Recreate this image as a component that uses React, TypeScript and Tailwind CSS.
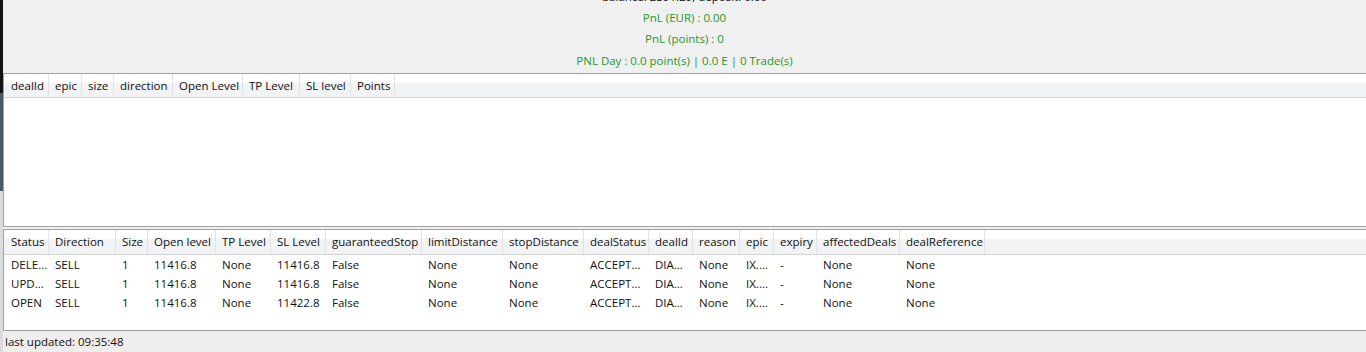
import React from "react";

// ── Data ─────────────────────────────────────────────────

const POSITION_COLS = [
  { label: "dealId", w: 44 },
  { label: "epic", w: 33 },
  { label: "size", w: 32 },
  { label: "direction", w: 59 },
  { label: "Open Level", w: 70 },
  { label: "TP Level", w: 57 },
  { label: "SL level", w: 51 },
  { label: "Points", w: 44 },
];

const HISTORY_COLS = [
  { label: "Status", w: 44 },
  { label: "Direction", w: 67 },
  { label: "Size", w: 32 },
  { label: "Open level", w: 68 },
  { label: "TP Level", w: 55 },
  { label: "SL Level", w: 55 },
  { label: "guaranteedStop", w: 96 },
  { label: "limitDistance", w: 81 },
  { label: "stopDistance", w: 81 },
  { label: "dealStatus", w: 65 },
  { label: "dealId", w: 44 },
  { label: "reason", w: 47 },
  { label: "epic", w: 34 },
  { label: "expiry", w: 43 },
  { label: "affectedDeals", w: 83 },
  { label: "dealReference", w: 85 },
];

const HISTORY_ROWS = [
  ["DELE...", "SELL", "1", "11416.8", "None", "11416.8", "False", "None", "None", "ACCEPT...", "DIA...", "None", "IX....", "-", "None", "None"],
  ["UPD...", "SELL", "1", "11416.8", "None", "11416.8", "False", "None", "None", "ACCEPT...", "DIA...", "None", "IX....", "-", "None", "None"],
  ["OPEN", "SELL", "1", "11416.8", "None", "11422.8", "False", "None", "None", "ACCEPT...", "DIA...", "None", "IX....", "-", "None", "None"],
];

// ── Pieces ───────────────────────────────────────────────

function HeaderRow({ cols, h }: { cols: { label: string; w: number }[]; h: string }) {
  return (
    <div
      className={`flex ${h} shrink-0 border-b border-[#d5d5d5] bg-[linear-gradient(#ffffff_0%,#ffffff_38%,#f2f3f5_38%,#f2f3f5_100%)]`}
    >
      <div className="w-[1px] shrink-0" />
      {cols.map((c) => (
        <div
          key={c.label}
          className="flex shrink-0 items-center overflow-hidden whitespace-nowrap border-r border-[#e3e3e3] pl-[6px]"
          style={{ width: c.w }}
        >
          {c.label}
        </div>
      ))}
    </div>
  );
}

// ── App ──────────────────────────────────────────────────

export default function App() {
  return (
    <div
      className="flex h-[352px] w-[1366px] overflow-hidden bg-[#f0f0f0] text-[11.5px] text-[#111]"
      style={{ fontFamily: '"Open Sans", "Noto Sans", sans-serif' }}
    >
      {/* window edge behind */}
      <div className="flex w-[3px] shrink-0 flex-col">
        <div className="h-[93px] bg-[#141414]" />
        <div className="h-[98px] bg-[#4a5868]" />
        <div className="flex-1 bg-[#dcdcdc]" />
      </div>

      <div className="flex min-w-0 flex-1 flex-col">
        {/* Summary */}
        <div className="flex h-[74px] shrink-0 flex-col items-center border-b border-[#a0a0a0]">
          <div className="-mt-[14px] flex h-[21px] items-center">balance: 2391.29, deposit: 0.00</div>
          <div className="flex h-[21px] items-center text-[#22992a]">PnL (EUR) : 0.00</div>
          <div className="flex h-[22px] items-center text-[#22992a]">PnL (points) : 0</div>
          <div className="flex h-[21px] items-center text-[#22992a]">
            PNL Day : 0.0 point(s) | 0.0 E | 0 Trade(s)
          </div>
        </div>

        {/* Open positions */}
        <div className="flex h-[153px] shrink-0 flex-col border-b border-l border-[#a0a0a0] bg-white">
          <HeaderRow cols={POSITION_COLS} h="h-[24px]" />
          <div className="flex-1" />
        </div>

        <div className="h-[2px] shrink-0" />

        {/* Deal history */}
        <div className="flex h-[102px] shrink-0 flex-col border-y border-l border-[#a0a0a0] bg-white">
          <HeaderRow cols={HISTORY_COLS} h="h-[25px]" />
          <div>
            {HISTORY_ROWS.map((row, i) => (
              <div key={i} className="flex h-[19px]">
                <div className="w-[1px] shrink-0" />
                {row.map((cell, j) => (
                  <div
                    key={j}
                    className="flex shrink-0 items-center overflow-hidden whitespace-nowrap pl-[6px]"
                    style={{ width: HISTORY_COLS[j].w }}
                  >
                    {cell}
                  </div>
                ))}
              </div>
            ))}
          </div>
        </div>

        {/* Status bar */}
        <div className="flex flex-1 items-center bg-[#f0eded] pl-[2px]">last updated: 09:35:48</div>
      </div>
    </div>
  );
}
